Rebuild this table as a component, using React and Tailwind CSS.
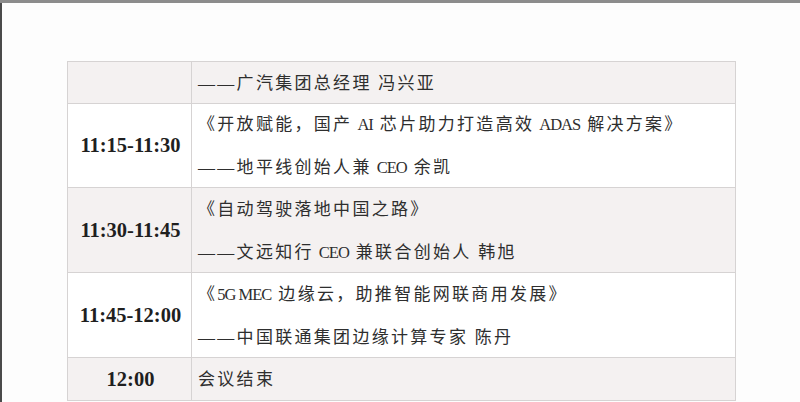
const rows = [
  { time: '', lines: ['——广汽集团总经理 冯兴亚'], shaded: true, h: 'h-[42px]' },
  {
    time: '11:15-11:30',
    lines: ['《开放赋能，国产 AI 芯片助力打造高效 ADAS 解决方案》', '——地平线创始人兼 CEO 余凯'],
    shaded: false,
    h: 'h-[84px]',
  },
  {
    time: '11:30-11:45',
    lines: ['《自动驾驶落地中国之路》', '——文远知行 CEO 兼联合创始人 韩旭'],
    shaded: true,
    h: 'h-[85px]',
  },
  {
    time: '11:45-12:00',
    lines: ['《5G MEC 边缘云，助推智能网联商用发展》', '——中国联通集团边缘计算专家 陈丹'],
    shaded: false,
    h: 'h-[85px]',
  },
  { time: '12:00', lines: ['会议结束'], shaded: true, h: 'h-[43px]' },
];

// latin runs are set narrower than the CJK ones, with a small fixed gap round them
function Line({ text }) {
  const parts = text.split(/( ?[A-Za-z0-9][A-Za-z0-9 ]*[A-Za-z0-9] ?| ?[A-Za-z0-9] ?)/);
  return parts.map((p, i) => {
    if (!/[A-Za-z0-9]/.test(p)) return <span key={i}>{p}</span>;
    const lead = p.startsWith(' ');
    const trail = p.endsWith(' ');
    return (
      <span key={i}>
        {lead && <span className="inline-block w-[5px]"></span>}
        <span className="text-[16.5px] tracking-[-1px]">{p.trim()}</span>
        {trail && <span className="inline-block w-[7px]"></span>}
      </span>
    );
  });
}

export default function App() {
  return (
    <div
      className="w-[800px] h-[402px] overflow-hidden bg-[#fdfdfd] flex flex-col text-[#262626]"
      style={{ fontFamily: "'Liberation Serif', 'Noto Sans CJK SC', serif" }}
    >
      {/* top edge */}
      <div className="h-[3px] bg-[#8c8c8c] shrink-0"></div>

      <div className="flex-1 border-l-2 border-[#4a4a4a] pt-[58px] pl-[65px]">
        <table className="border-collapse">
          <tbody>
            {rows.map((r, i) => (
              <tr key={i} className={`${r.h} ${r.shaded ? 'bg-[#f4f1f1]' : 'bg-white'}`}>
                <td className="w-[124px] border border-[#d6d3d3] p-0 pl-[2px] text-center align-middle text-[20.5px] font-bold leading-none text-[#1f1f1f]">
                  {r.time}
                </td>
                <td className="w-[544px] border border-[#d6d3d3] pl-[6px] pt-[2px] pb-0 align-middle">
                  <div className="flex flex-col gap-[19px]">
                    {r.lines.map((l, j) => (
                      <div key={j} className="text-[17px] leading-[24px] tracking-[2.3px] text-[#2e2e2e] whitespace-nowrap">
                        <Line text={l} />
                      </div>
                    ))}
                  </div>
                </td>
              </tr>
            ))}
          </tbody>
        </table>
      </div>
    </div>
  );
}
